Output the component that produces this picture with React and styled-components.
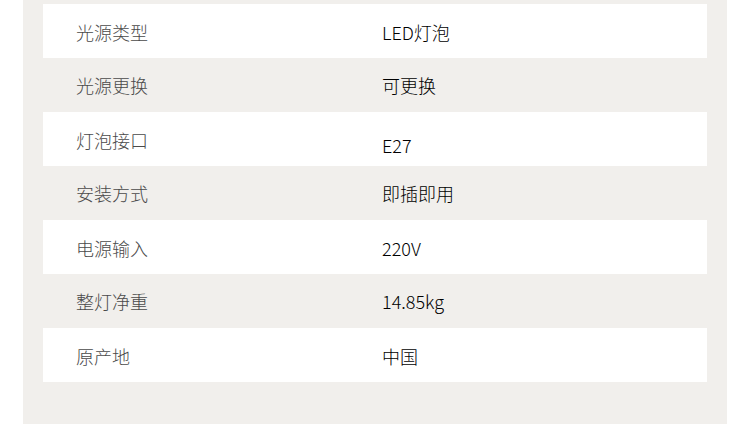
import React from 'react';
import styled, { createGlobalStyle } from 'styled-components';

const GlobalStyle = createGlobalStyle`
    html, body {
        margin: 0;
        padding: 0;
        background: #ffffff;
    }
    body {
        font-family: "Noto Sans CJK SC", "Noto Sans", sans-serif;
    }
`

const Page = styled.div`
    width: 750px;
    height: 424px;
    overflow: hidden;
    padding: 0 23px 0 23px;
    box-sizing: border-box;
`

const Panel = styled.div`
    background-color: #f1efec;
    height: 100%;
    padding: 4px 20px 0 20px;
    box-sizing: border-box;
`

const Row = styled.div`
    display: grid;
    grid-template-columns: 306px 1fr;
    align-items: center;
    height: 54px;
    padding-left: 33px;
    box-sizing: border-box;
    background-color: ${props => props.striped ? 'transparent' : '#ffffff'};
`

const Label = styled.span`
    font-size: 18px;
    font-weight: 300;
    color: #4a4a4a;
    line-height: 1;
    padding-top: ${props => props.striped ? '0' : '1px'};
`

const Value = styled.span`
    font-size: 18px;
    font-weight: 300;
    color: #000000;
    line-height: 1;
    padding-top: ${props => props.drop ? '12px' : props.striped ? '0' : '1px'};
`

const specs = [
    { label: '光源类型', value: 'LED灯泡' },
    { label: '光源更换', value: '可更换' },
    { label: '灯泡接口', value: 'E27', drop: true },
    { label: '安装方式', value: '即插即用' },
    { label: '电源输入', value: '220V' },
    { label: '整灯净重', value: '14.85kg' },
    { label: '原产地', value: '中国' }
];

export default function App() {
    return (
        <Page>
            <GlobalStyle />
            <Panel>
                {specs.map((s, i) => (
                    <Row key={s.label} striped={i % 2 === 1}>
                        <Label striped={i % 2 === 1}>{s.label}</Label>
                        <Value striped={i % 2 === 1} drop={s.drop}>{s.value}</Value>
                    </Row>
                ))}
            </Panel>
        </Page>
    );
}
